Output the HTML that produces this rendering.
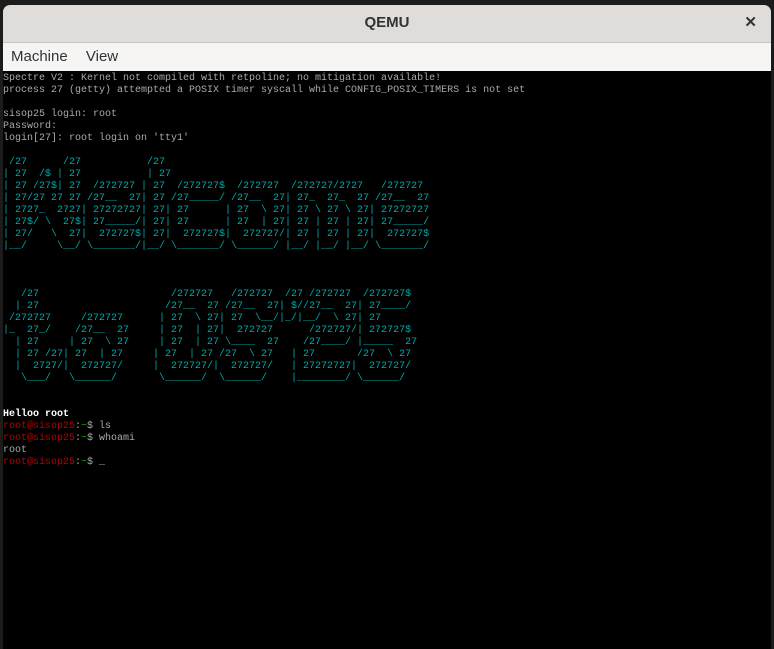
<!DOCTYPE html>
<html><head><meta charset="utf-8"><style>
html,body{margin:0;padding:0;width:774px;height:649px;background:#1c1c1c;overflow:hidden}
.win{position:absolute;left:3px;top:5px;width:768px;height:644px;background:#000;border-radius:7px 7px 0 0;overflow:hidden}
.title{height:37px;background:#dfdcd9;border-bottom:1px solid #c8c4c0;text-align:center;font:bold 15px "Liberation Sans",sans-serif;color:#2e3436;line-height:36px;position:relative}
.x{position:absolute;right:14px;top:0;font-size:15px;font-weight:bold}
.menu{height:28px;background:#f6f5f4;font:15px "Liberation Sans",sans-serif;color:#2e3436;line-height:28px;padding-left:8px}
.menu span{margin-right:14px}
pre{margin:0;position:absolute;left:0;top:68px;font:10px/12px "Liberation Mono",monospace;color:#aaa;letter-spacing:0}
.c{color:#00a8a8}.w{color:#fff;font-weight:bold}.r{color:#b40000}.g{color:#00b000}
</style></head><body>
<div class="win">
<div class="title">QEMU<span class="x">✕</span></div>
<div class="menu"><span>Machine</span> <span>View</span></div>
<pre>Spectre V2 : Kernel not compiled with retpoline; no mitigation available!
process 27 (getty) attempted a POSIX timer syscall while CONFIG_POSIX_TIMERS is not set

sisop25 login: root
Password:
login[27]: root login on 'tty1'

<span class="c"> /27      /27           /27
| 27  /$ | 27           | 27
| 27 /27$| 27  /272727 | 27  /272727$  /272727  /272727/2727   /272727
| 27/27 27 27 /27__  27| 27 /27_____/ /27__  27| 27_  27_  27 /27__  27
| 2727_  2727| 27272727| 27| 27      | 27  \ 27| 27 \ 27 \ 27| 27272727
| 27$/ \  27$| 27_____/| 27| 27      | 27  | 27| 27 | 27 | 27| 27_____/
| 27/   \  27|  272727$| 27|  272727$|  272727/| 27 | 27 | 27|  272727$
|__/     \__/ \_______/|__/ \_______/ \______/ |__/ |__/ |__/ \_______/



   /27                      /272727   /272727  /27 /272727  /272727$
  | 27                     /27__  27 /27__  27| $//27__  27| 27____/
 /272727     /272727      | 27  \ 27| 27  \__/|_/|__/  \ 27| 27
|_  27_/    /27__  27     | 27  | 27|  272727      /272727/| 272727$
  | 27     | 27  \ 27     | 27  | 27 \____  27    /27____/ |_____  27
  | 27 /27| 27  | 27     | 27  | 27 /27  \ 27   | 27       /27  \ 27
  |  2727/|  272727/     |  272727/|  272727/   | 27272727|  272727/
   \___/   \______/       \______/  \______/    |________/ \______/</span>


<span class="w">Helloo root</span>
<span class="r">root@sisop25</span>:<span class="g">~</span>$ ls
<span class="r">root@sisop25</span>:<span class="g">~</span>$ whoami
root
<span class="r">root@sisop25</span>:<span class="g">~</span>$ _</pre>
</div>
</body></html>
